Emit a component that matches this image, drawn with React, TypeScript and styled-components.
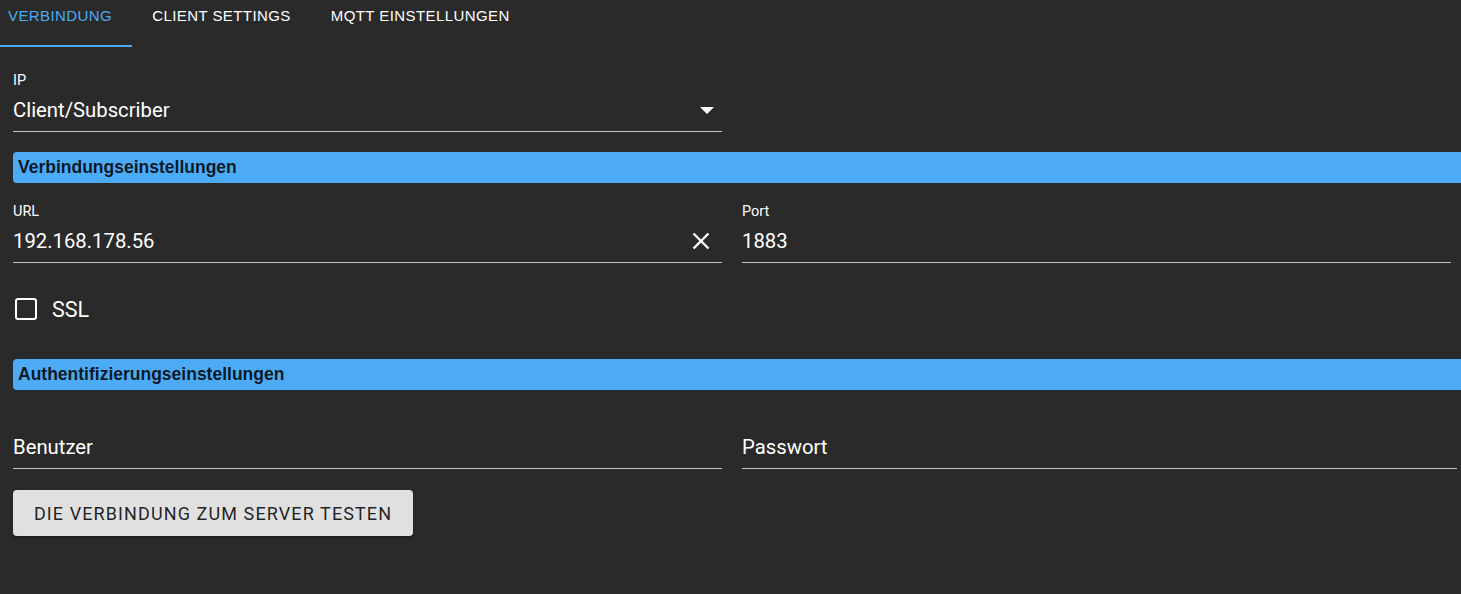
import React from 'react';
import styled, { createGlobalStyle } from 'styled-components';

const GlobalStyle = createGlobalStyle`
	html, body {
		margin: 0;
		padding: 0;
		background: #2a2a2a;
		overflow: hidden;
	}
	* {
		box-sizing: border-box;
	}
`;

const Page = styled.div`
	width: 1461px;
	height: 594px;
	background: #2a2a2a;
	color: #fff;
	font-family: Roboto, 'Liberation Sans', sans-serif;
	overflow: hidden;
`;

const TabBar = styled.div`
	display: flex;
	height: 47px;
	margin-left: -12px;
`;

const Tab = styled.div<{ $active?: boolean }>`
	position: relative;
	padding: 7px 20px 0;
	height: 47px;
	font-family: 'Liberation Sans', Arial, sans-serif;
	font-size: 15px;
	line-height: 17px;
	letter-spacing: 0.42px;
	text-transform: uppercase;
	color: ${(p) => (p.$active ? '#4dabf5' : '#ffffff')};
	white-space: nowrap;

	&::after {
		content: '';
		display: ${(p) => (p.$active ? 'block' : 'none')};
		position: absolute;
		left: 0;
		right: 0;
		bottom: 0;
		height: 2px;
		background: #4dabf5;
	}
`;

const Form = styled.div`
	display: flex;
	flex-direction: column;
	padding: 25px 0 0 13px;
`;

const Row = styled.div<{ $top?: number }>`
	display: flex;
	gap: 20px;
	margin-top: ${(p) => p.$top ?? 0}px;
`;

const FieldBox = styled.div<{ $width: number }>`
	display: flex;
	flex-direction: column;
	width: ${(p) => p.$width}px;
`;

const Label = styled.div`
	height: 16px;
	font-size: 14.5px;
	line-height: 18px;
	color: #ffffff;
`;

const InputLine = styled.div`
	display: flex;
	align-items: center;
	height: 44px;
	padding-top: 1px;
	border-bottom: 1px solid rgba(255, 255, 255, 0.72);
`;

const Value = styled.div`
	flex: 1;
	font-size: 20.3px;
	color: #ffffff;
`;

const Adornment = styled.div<{ $right: number }>`
	display: flex;
	align-items: center;
	justify-content: center;
	width: 24px;
	margin-right: ${(p) => p.$right}px;
`;

const SectionBar = styled.div<{ $top: number }>`
	margin-top: ${(p) => p.$top}px;
	width: 1460px;
	height: 31px;
	padding: 0 0 0 5px;
	display: flex;
	align-items: center;
	background: #4dabf5;
	border-radius: 4px;
	font-family: 'Liberation Sans', Arial, sans-serif;
	font-weight: bold;
	font-size: 17.5px;
	color: rgba(0, 0, 0, 0.87);
`;

const CheckRow = styled.label`
	display: flex;
	align-items: center;
	gap: 15px;
	height: 92px;
	padding-left: 2px;
	font-size: 21.5px;
	color: #fff;
`;

const CheckBox = styled.span`
	width: 22px;
	height: 22px;
	border: 2px solid #fff;
	border-radius: 3px;
`;

const TestButton = styled.button`
	margin-top: 21px;
	width: 400px;
	height: 46px;
	border: none;
	border-radius: 4px;
	background: #e0e0e0;
	box-shadow: 0 2px 3px rgba(0, 0, 0, 0.3);
	font-family: Roboto, 'Liberation Sans', sans-serif;
	font-size: 18px;
	letter-spacing: 1.1px;
	text-transform: uppercase;
	color: rgba(0, 0, 0, 0.87);
	cursor: pointer;
`;

interface FieldProps {
	label?: string;
	value: string;
	width?: number;
	adornment?: React.ReactNode;
	adornmentRight?: number;
}

function Field({ label, value, width = 709, adornment, adornmentRight = 8 }: FieldProps) {
	return (
		<FieldBox $width={width}>
			<Label>{label}</Label>
			<InputLine>
				<Value>{value}</Value>
				{adornment && <Adornment $right={adornmentRight}>{adornment}</Adornment>}
			</InputLine>
		</FieldBox>
	);
}

const DropArrow = () => (
	<svg width="14" height="7" viewBox="0 0 14 7">
		<path d="M0 0 L14 0 L7 7 Z" fill="#fff" />
	</svg>
);

const ClearIcon = () => (
	<svg width="18" height="18" viewBox="0 0 18 18">
		<path d="M1.5 1.5 L16.5 16.5 M16.5 1.5 L1.5 16.5" stroke="#fff" strokeWidth="2.4" />
	</svg>
);

export default function App() {
	return (
		<Page>
			<GlobalStyle />
			<TabBar>
				<Tab $active>Verbindung</Tab>
				<Tab>Client Settings</Tab>
				<Tab>MQTT Einstellungen</Tab>
			</TabBar>
			<Form>
				<Field label="IP" value="Client/Subscriber" adornment={<DropArrow />} adornmentRight={3} />
				<SectionBar $top={20}>Verbindungseinstellungen</SectionBar>
				<Row $top={20}>
					<Field label="URL" value="192.168.178.56" adornment={<ClearIcon />} adornmentRight={9} />
					<Field label="Port" value="1883" />
				</Row>
				<CheckRow>
					<CheckBox />
					SSL
				</CheckRow>
				<SectionBar $top={4}>Authentifizierungseinstellungen</SectionBar>
				<Row $top={19}>
					<Field value="Benutzer" />
					<Field value="Passwort" width={715} />
				</Row>
				<div>
					<TestButton>Die Verbindung zum Server testen</TestButton>
				</div>
			</Form>
		</Page>
	);
}
